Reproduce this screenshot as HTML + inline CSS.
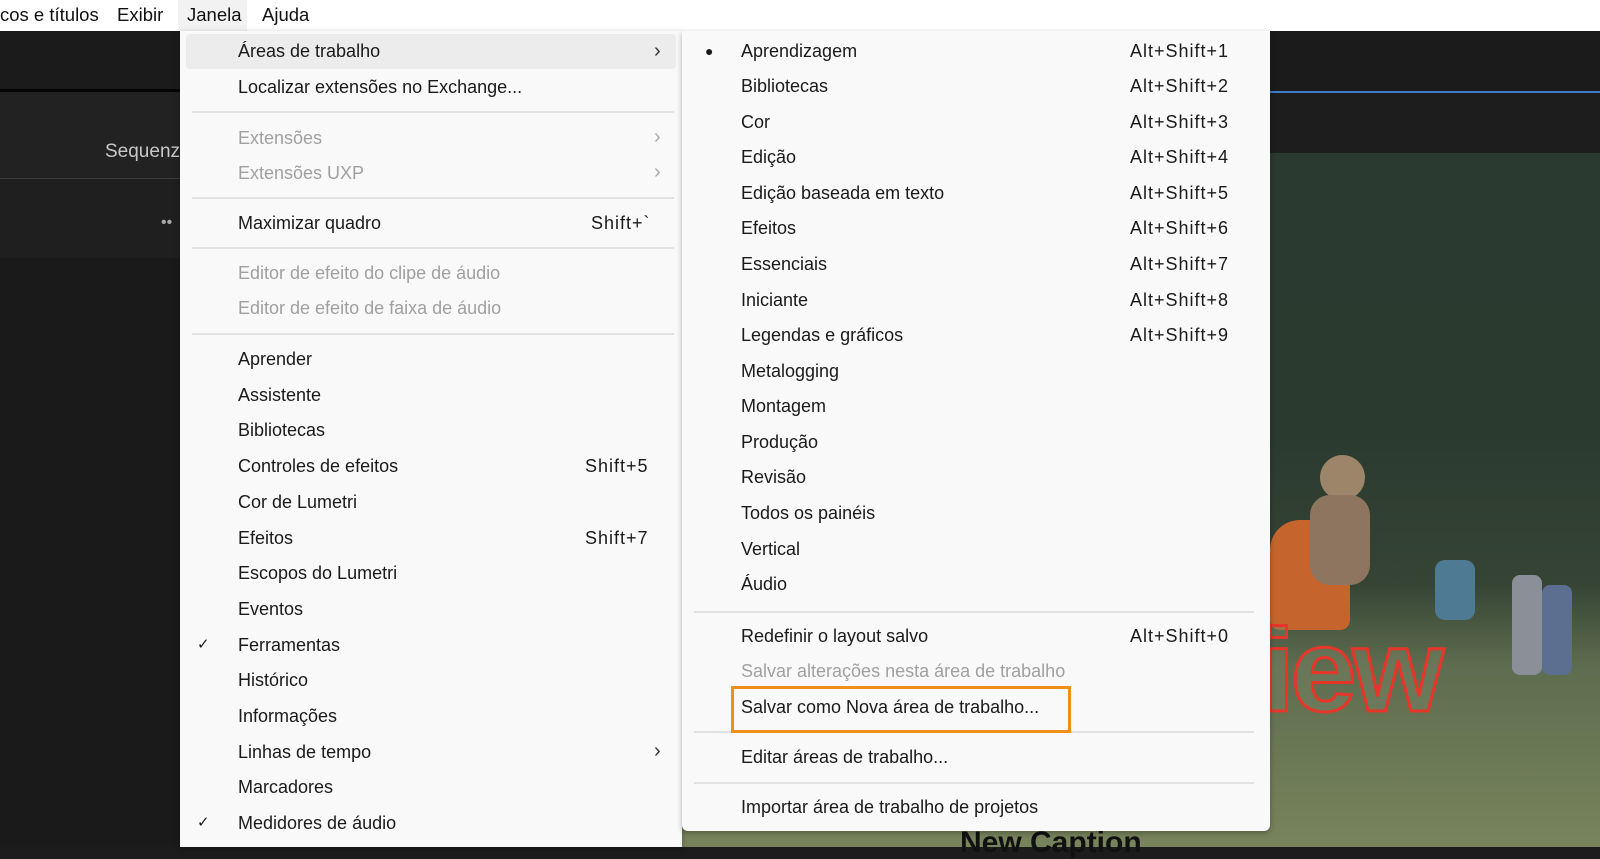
<!DOCTYPE html>
<html><head><meta charset="utf-8"><style>
*{margin:0;padding:0;box-sizing:border-box}
body{width:1600px;height:847px;overflow:hidden;background:#1c1c1c;font-family:"Liberation Sans",sans-serif;position:relative}
.a{position:absolute}
.mb{left:0;top:0;width:1600px;height:31px;background:#fff;font-size:18.5px;color:#111}
.mb span{position:absolute;top:4px}
.menu{background:#f9f9f9;font-size:18px;color:#1a1a1a}
.it{position:absolute;white-space:nowrap;line-height:22px}
.dis{color:#a0a0a0}
.sc{position:absolute;white-space:nowrap;line-height:22px;letter-spacing:1px}
.sep{position:absolute;height:2px;background:#e2e2e2}
.chev{position:absolute;font-size:20px;color:#333;line-height:22px}
</style></head><body>
<div class="a" style="left:0;top:31px;width:180px;height:59px;background:#1b1b1b"></div>
<div class="a" style="left:0;top:89px;width:180px;height:3px;background:#050505"></div>
<div class="a" style="left:0;top:92px;width:180px;height:86px;background:#222"></div>
<div class="a" style="left:0;top:178px;width:180px;height:1px;background:#3c3c3c"></div>
<div class="a" style="left:0;top:179px;width:180px;height:79px;background:#1f1f1f"></div>
<div class="a" style="left:0;top:258px;width:180px;height:589px;background:#1a1a1a"></div>
<div class="a" style="left:105px;top:141px;color:#c8c8c8;font-size:19px">Sequenz</div>
<div class="a" style="left:161px;top:214px;color:#aaa;font-size:16px">••</div>
<div class="a" style="left:682px;top:31px;width:918px;height:61px;background:#1b1b1b"></div>
<div class="a" style="left:1270px;top:91px;width:330px;height:2px;background:#3a7cc8"></div>
<div class="a" style="left:682px;top:93px;width:918px;height:60px;background:#1d1d1d"></div>
<div class="a" style="left:682px;top:153px;width:918px;height:694px;background:linear-gradient(180deg,#2b3a30 0%,#2a3a2f 40%,#354434 62%,#5e6d4f 74%,#78845c 100%)"></div>
<div class="a" style="left:1270px;top:520px;width:80px;height:110px;background:#c5652d;border-radius:30px 30px 10px 10px"></div>
<div class="a" style="left:1320px;top:455px;width:45px;height:45px;background:#9c8568;border-radius:50%"></div>
<div class="a" style="left:1310px;top:495px;width:60px;height:90px;background:#8d7560;border-radius:20px"></div>
<div class="a" style="left:1435px;top:560px;width:40px;height:60px;background:#4f7a93;border-radius:10px"></div>
<div class="a" style="left:1512px;top:575px;width:30px;height:100px;background:#8a8f98;border-radius:8px"></div>
<div class="a" style="left:1542px;top:585px;width:30px;height:90px;background:#5c6f90;border-radius:8px"></div>
<div class="a" style="left:1262px;top:612px;font:bold 118px/1 'Liberation Sans',sans-serif;color:rgba(120,130,100,.45);-webkit-text-stroke:3px #e8352a;letter-spacing:-4px">iew</div>
<div class="a" style="left:960px;top:828px;font:bold 30px/1 'Liberation Sans',sans-serif;color:#111">New Caption</div>
<div class="a mb">
<span style="left:0">cos e títulos</span>
<span style="left:117px">Exibir</span>
<div class="a" style="left:178px;top:0;width:69px;height:31px;background:#f2f2f2"></div>
<span style="left:187px">Janela</span>
<span style="left:262px">Ajuda</span>
</div>
<div class="a menu" style="left:180px;top:31px;width:502px;height:816px;box-shadow:0 2px 6px rgba(0,0,0,.3)">
<div class="a" style="left:6px;top:3px;width:490px;height:35px;background:#ececec;border-radius:4px"></div>
<div class="it" style="left:58px;top:9px">Áreas de trabalho</div><div class="chev" style="left:474px;top:9px">›</div>
<div class="it" style="left:58px;top:45px">Localizar extensões no Exchange...</div>
<div class="sep" style="left:12px;top:80px;width:482px"></div>
<div class="it dis" style="left:58px;top:96px">Extensões</div><div class="chev dis" style="left:474px;top:95px;color:#aaa">›</div>
<div class="it dis" style="left:58px;top:131px">Extensões UXP</div><div class="chev" style="left:474px;top:130px;color:#aaa">›</div>
<div class="sep" style="left:12px;top:166px;width:482px"></div>
<div class="it" style="left:58px;top:181px">Maximizar quadro</div><div class="sc" style="left:411px;top:181px">Shift+`</div>
<div class="sep" style="left:12px;top:216px;width:482px"></div>
<div class="it dis" style="left:58px;top:231px">Editor de efeito do clipe de áudio</div>
<div class="it dis" style="left:58px;top:266px">Editor de efeito de faixa de áudio</div>
<div class="sep" style="left:12px;top:302px;width:482px"></div>
<div class="it" style="left:58px;top:317px">Aprender</div>
<div class="it" style="left:58px;top:353px">Assistente</div>
<div class="it" style="left:58px;top:388px">Bibliotecas</div>
<div class="it" style="left:58px;top:424px">Controles de efeitos</div><div class="sc" style="left:405px;top:424px">Shift+5</div>
<div class="it" style="left:58px;top:460px">Cor de Lumetri</div>
<div class="it" style="left:58px;top:496px">Efeitos</div><div class="sc" style="left:405px;top:496px">Shift+7</div>
<div class="it" style="left:58px;top:531px">Escopos do Lumetri</div>
<div class="it" style="left:58px;top:567px">Eventos</div>
<div class="it" style="left:17px;top:603px;font-size:15px">✓</div>
<div class="it" style="left:58px;top:603px">Ferramentas</div>
<div class="it" style="left:58px;top:638px">Histórico</div>
<div class="it" style="left:58px;top:674px">Informações</div>
<div class="it" style="left:58px;top:710px">Linhas de tempo</div><div class="chev" style="left:474px;top:709px">›</div>
<div class="it" style="left:58px;top:745px">Marcadores</div>
<div class="it" style="left:17px;top:781px;font-size:15px">✓</div>
<div class="it" style="left:58px;top:781px">Medidores de áudio</div>
</div>
<div class="a menu" style="left:682px;top:31px;width:588px;height:800px;border-radius:0 0 6px 6px;box-shadow:0 2px 6px rgba(0,0,0,.3)">
<div class="it" style="left:23px;top:9px;font-size:14px">●</div>
<div class="it" style="left:59px;top:9px">Aprendizagem</div><div class="sc" style="left:448px;top:9px">Alt+Shift+1</div>
<div class="it" style="left:59px;top:44px">Bibliotecas</div><div class="sc" style="left:448px;top:44px">Alt+Shift+2</div>
<div class="it" style="left:59px;top:80px">Cor</div><div class="sc" style="left:448px;top:80px">Alt+Shift+3</div>
<div class="it" style="left:59px;top:115px">Edição</div><div class="sc" style="left:448px;top:115px">Alt+Shift+4</div>
<div class="it" style="left:59px;top:151px">Edição baseada em texto</div><div class="sc" style="left:448px;top:151px">Alt+Shift+5</div>
<div class="it" style="left:59px;top:186px">Efeitos</div><div class="sc" style="left:448px;top:186px">Alt+Shift+6</div>
<div class="it" style="left:59px;top:222px">Essenciais</div><div class="sc" style="left:448px;top:222px">Alt+Shift+7</div>
<div class="it" style="left:59px;top:258px">Iniciante</div><div class="sc" style="left:448px;top:258px">Alt+Shift+8</div>
<div class="it" style="left:59px;top:293px">Legendas e gráficos</div><div class="sc" style="left:448px;top:293px">Alt+Shift+9</div>
<div class="it" style="left:59px;top:329px">Metalogging</div>
<div class="it" style="left:59px;top:364px">Montagem</div>
<div class="it" style="left:59px;top:400px">Produção</div>
<div class="it" style="left:59px;top:435px">Revisão</div>
<div class="it" style="left:59px;top:471px">Todos os painéis</div>
<div class="it" style="left:59px;top:507px">Vertical</div>
<div class="it" style="left:59px;top:542px">Áudio</div>
<div class="sep" style="left:12px;top:580px;width:560px"></div>
<div class="it" style="left:59px;top:594px">Redefinir o layout salvo</div><div class="sc" style="left:448px;top:594px">Alt+Shift+0</div>
<div class="it dis" style="left:59px;top:629px">Salvar alterações nesta área de trabalho</div>
<div class="it" style="left:59px;top:665px">Salvar como Nova área de trabalho...</div>
<div class="sep" style="left:12px;top:700px;width:560px"></div>
<div class="it" style="left:59px;top:715px">Editar áreas de trabalho...</div>
<div class="sep" style="left:12px;top:751px;width:560px"></div>
<div class="it" style="left:59px;top:765px">Importar área de trabalho de projetos</div>
</div>
<div class="a" style="left:731px;top:686px;width:340px;height:47px;border:3px solid #f0901a"></div>
</body></html>
